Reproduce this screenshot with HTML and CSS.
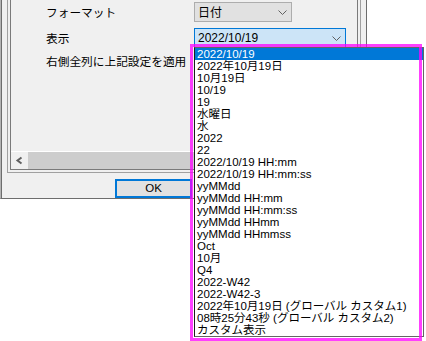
FILE: index.html
```html
<!DOCTYPE html>
<html lang="ja">
<head>
<meta charset="utf-8">
<link rel="stylesheet" href="styles.css">
</head>
<body>
<div class="screen">
  <div class="dialog">
    <div class="group">
      <div class="panel">
        <div class="props">
          <div class="prop">
            <span class="label">フォーマット</span>
            <div class="combo combo-format">
              <span class="combo-text">日付</span>
              <svg class="chev" width="9" height="5" viewBox="0 0 9 5"><polyline points="0.5,0.5 4.5,4.5 8.5,0.5" fill="none" stroke="#606060" stroke-width="1"/></svg>
            </div>
          </div>
          <div class="prop">
            <span class="label">表示</span>
            <div class="combo combo-display">
              <span class="combo-text latin">2022/10/19</span>
              <svg class="chev" width="9" height="5" viewBox="0 0 9 5"><polyline points="0.5,0.5 4.5,4.5 8.5,0.5" fill="none" stroke="#606060" stroke-width="1"/></svg>
            </div>
          </div>
          <div class="prop prop-short">
            <span class="label">右側全列に上記設定を適用</span>
          </div>
        </div>
        <div class="sep"></div>
        <div class="hscroll">
          <div class="sbtn">
            <svg width="17" height="17" viewBox="0 0 17 17"><polyline points="10.5,5.5 6.5,8.5 10.5,11.5" fill="none" stroke="#606060" stroke-width="2"/></svg>
          </div>
          <div class="thumb"></div>
        </div>
      </div>
    </div>
    <div class="actions">
      <div class="btn-ok">OK</div>
    </div>
  </div>

  <ul class="droplist">
    <li class="sel">2022/10/19</li>
    <li>2022年10月19日</li>
    <li>10月19日</li>
    <li>10/19</li>
    <li>19</li>
    <li>水曜日</li>
    <li>水</li>
    <li>2022</li>
    <li>22</li>
    <li>2022/10/19 HH:mm</li>
    <li>2022/10/19 HH:mm:ss</li>
    <li>yyMMdd</li>
    <li>yyMMdd HH:mm</li>
    <li>yyMMdd HH:mm:ss</li>
    <li>yyMMdd HHmm</li>
    <li>yyMMdd HHmmss</li>
    <li>Oct</li>
    <li>10月</li>
    <li>Q4</li>
    <li>2022-W42</li>
    <li>2022-W42-3</li>
    <li>2022年10月19日 (グローバル カスタム1)</li>
    <li>08時25分43秒 (グローバル カスタム2)</li>
    <li>カスタム表示</li>
  </ul>

  <div class="highlight"></div>
</div>
</body>
</html>
```

FILE: styles.css
```css
* {
  box-sizing: border-box;
  margin: 0;
  padding: 0;
}

body {
  margin: 0;
  background: #ffffff;
  font-family: "Noto Sans CJK JP", sans-serif;
  color: #000000;
}

.screen {
  position: relative;
  width: 426px;
  height: 341px;
  overflow: hidden;
  background: #ffffff;
}

.dialog {
  width: 367px;
  height: 199px;
  background: #f0f0f0;
  border-left: 1px solid #b4b4b4;
  border-right: 1px solid #6d6d6d;
  border-bottom: 1px solid #6d6d6d;
  padding-left: 1px;
  box-shadow: inset 1px 0 0 #6d6d6d;
}

.group {
  margin: 0 5px;
  height: 173px;
  border: 1px solid #a0a0a0;
  border-top: 0;
  padding: 0 2px 2px;
}

.panel {
  height: 170px;
  border: 1px solid #7a7a7a;
  border-top: 0;
  display: flex;
  flex-direction: column;
}

.props {
  height: 151px;
  padding: 2px 0 0 35px;
  display: flex;
  flex-direction: column;
  gap: 6px;
}

.prop {
  display: flex;
  align-items: center;
  height: 20px;
}

.prop-short {
  height: 14px;
}

.label {
  width: 148px;
  font-size: 11.7px;
  line-height: 14px;
  white-space: nowrap;
}

.combo {
  height: 20px;
  display: flex;
  align-items: center;
  border: 1px solid #adadad;
  background: #e1e1e1;
  padding: 0 4px 0 3px;
}

.combo-format {
  width: 98px;
}

.combo-display {
  width: 152px;
  background: #cce4f7;
  border-color: #0078d7;
}

.combo-text {
  font-size: 12px;
  line-height: 14px;
  white-space: nowrap;
}

.latin {
  font-family: "Liberation Sans", "Noto Sans CJK JP", sans-serif;
}

.chev {
  margin-left: auto;
  display: block;
}

.sep {
  height: 1px;
  background: #ffffff;
}

.hscroll {
  height: 17px;
  display: flex;
}

.sbtn {
  width: 17px;
  height: 17px;
  background: #f0f0f0;
}

.sbtn svg {
  display: block;
}

.thumb {
  flex: 1;
  background: #cdcdcd;
}

.actions {
  display: flex;
  padding: 6px 0 0 113px;
}

.btn-ok {
  width: 77px;
  height: 19px;
  border: 2px solid #0078d7;
  background: #e1e1e1;
  display: flex;
  align-items: center;
  justify-content: center;
  font-family: "Liberation Sans", sans-serif;
  font-size: 11.5px;
  line-height: 13px;
}

.droplist {
  position: absolute;
  left: 194px;
  top: 47px;
  width: 230px;
  height: 290px;
  list-style: none;
  background: #ffffff;
  border: 1px solid #646464;
  border-left-color: #1e1e1e;
  font-family: "Liberation Sans", "Noto Sans CJK JP", sans-serif;
  font-size: 11.5px;
  line-height: 12px;
}

.droplist li {
  height: 12px;
  padding-left: 2px;
  white-space: nowrap;
  overflow: hidden;
}

.droplist li.sel {
  background: #0078d7;
  color: #ffffff;
}

.highlight {
  position: absolute;
  left: 190px;
  top: 44px;
  width: 232px;
  height: 297px;
  border: 3px solid rgba(255, 0, 255, 0.75);
}
```
